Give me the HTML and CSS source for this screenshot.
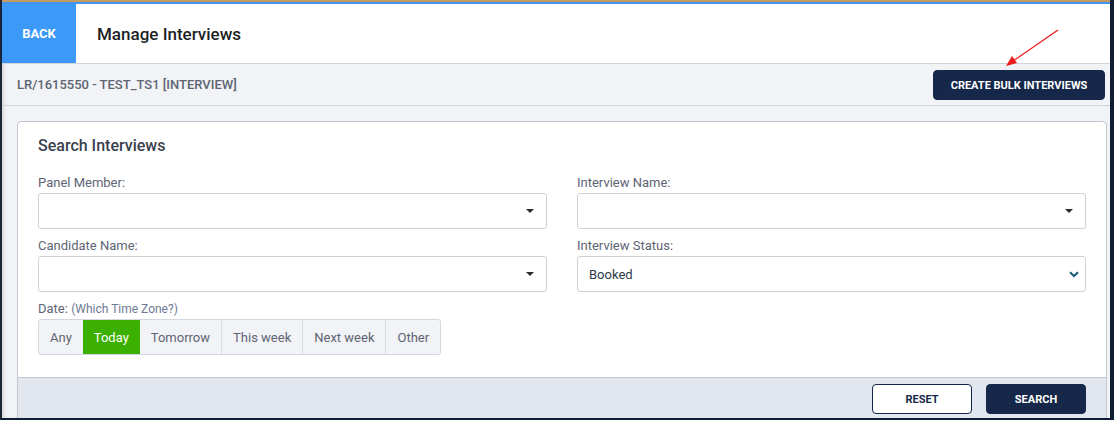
FILE: index.html
```html
<!DOCTYPE html>
<html lang="en">
<head>
    <meta charset="UTF-8">
    <title>Manage Interviews</title>
    <link rel="stylesheet" href="styles.css">
</head>
<body>
    <div class="frame">
        <div class="top-strip"></div>

        <div class="header">
            <a class="back-btn" href="#">BACK</a>
            <h1>Manage Interviews</h1>
        </div>

        <div class="subbar">
            <span class="job-ref">LR/1615550 - TEST_TS1 [INTERVIEW]</span>
            <button class="btn-dark bulk-btn">CREATE BULK INTERVIEWS</button>
            <svg class="arrow" width="60" height="40" viewBox="0 0 60 40">
                <line x1="55" y1="2" x2="10" y2="33" stroke="#ee1c1c" stroke-width="1.3"/>
                <polygon points="3,38 9,28 14,35" fill="#ee1c1c"/>
            </svg>
        </div>

        <div class="panel">
            <div class="panel-body">
                <h2>Search Interviews</h2>

                <div class="form-grid">
                    <div class="field">
                        <label>Panel Member:</label>
                        <div class="select"><span class="caret"></span></div>
                    </div>
                    <div class="field">
                        <label>Interview Name:</label>
                        <div class="select"><span class="caret"></span></div>
                    </div>
                    <div class="field">
                        <label>Candidate Name:</label>
                        <div class="select"><span class="caret"></span></div>
                    </div>
                    <div class="field">
                        <label>Interview Status:</label>
                        <div class="select">
                            <span class="value">Booked</span>
                            <svg class="chevron" width="10" height="7" viewBox="0 0 10 7">
                                <path d="M1 1.2 L5 5 L9 1.2" fill="none" stroke="#1d5878" stroke-width="2"/>
                            </svg>
                        </div>
                    </div>
                </div>

                <div class="date-row">
                    <label>Date: <span class="tz">(Which Time Zone?)</span></label>
                    <div class="btn-group">
                        <span>Any</span>
                        <span class="active">Today</span>
                        <span>Tomorrow</span>
                        <span>This week</span>
                        <span>Next week</span>
                        <span>Other</span>
                    </div>
                </div>
            </div>

            <div class="panel-footer">
                <button class="btn-light">RESET</button>
                <button class="btn-dark">SEARCH</button>
            </div>
        </div>
    </div>
</body>
</html>
```

FILE: styles.css
```css
html, body {
    margin: 0;
    padding: 0;
    background-color: white;
}

body {
    font-family: Roboto, 'Liberation Sans', Arial, sans-serif;
    color: #5b6272;
    width: 1114px;
    height: 422px;
    overflow: hidden;
}

.frame {
    width: 1108px;
    height: 418px;
    border-left: 2px solid #1a2638;
    border-right: 4px solid #0f1e33;
    border-bottom: 2px solid #0f1e33;
    box-shadow: inset 4px 0 4px -2px rgba(0,0,0,0.12);
    background-color: #f2f3f6;
    overflow: hidden;
}

.top-strip {
    height: 2px;
    background-color: #c39b62;
    border-bottom: 2px solid #3f95ef;
}

.header {
    display: flex;
    align-items: center;
    height: 59px;
    background-color: white;
    border-bottom: 1px solid #d0d4da;
}

.back-btn {
    display: flex;
    align-items: center;
    justify-content: center;
    width: 74px;
    height: 100%;
    background-color: #3d99f8;
    color: white;
    font-size: 13px;
    font-weight: bold;
    text-decoration: none;
}

.header h1 {
    margin: 0 0 0 21px;
    font-size: 17px;
    font-weight: 500;
    color: #1d1f24;
}

.subbar {
    position: relative;
    display: flex;
    align-items: center;
    justify-content: space-between;
    height: 41px;
    padding: 0 5px 0 15px;
    border-bottom: 1px solid #d0d4da;
}

.job-ref {
    font-size: 13px;
    font-weight: 500;
    color: #5d6473;
}

.arrow {
    position: absolute;
    top: -36px;
    right: 47px;
}

button {
    font-family: inherit;
    font-size: 11px;
    font-weight: bold;
    border-radius: 4px;
    cursor: pointer;
}

.btn-dark {
    background-color: #16284a;
    color: white;
    border: 1px solid #16284a;
}

.btn-light {
    background-color: white;
    color: #16284a;
    border: 1px solid #16284a;
}

.bulk-btn {
    width: 172px;
    height: 30px;
    margin: 1px 0 0 0;
}

.panel {
    margin: 15px 3px 0 15px;
    background-color: white;
    border: 1px solid #c2c7d0;
    border-radius: 4px;
}

.panel-body {
    padding: 14px 20px 22px 20px;
}

.panel-body h2 {
    margin: 0 0 20px 0;
    font-size: 16px;
    font-weight: 500;
    color: #3a404d;
}

.form-grid {
    display: grid;
    grid-template-columns: 1fr 1fr;
    column-gap: 30px;
    row-gap: 9px;
}

label {
    display: block;
    font-size: 13px;
    color: #5d6473;
    margin-bottom: 3px;
}

.select {
    position: relative;
    display: flex;
    align-items: center;
    height: 34px;
    padding: 0 11px;
    border: 1px solid #cdd1d8;
    border-radius: 3px;
    background-color: white;
}

.caret {
    position: absolute;
    right: 12px;
    top: 15px;
    border-left: 4px solid transparent;
    border-right: 4px solid transparent;
    border-top: 4px solid #2b2b2b;
}

.value {
    font-size: 13px;
    color: #2c3a4a;
}

.chevron {
    position: absolute;
    right: 6px;
    top: 14px;
}

.date-row {
    margin-top: 9px;
}

.tz {
    font-size: 12px;
    color: #6e7a94;
}

.btn-group {
    display: inline-flex;
    height: 34px;
    border: 1px solid #d4d7dd;
    border-radius: 3px;
    background-color: #f2f3f6;
    overflow: hidden;
}

.btn-group span {
    display: flex;
    align-items: center;
    padding: 0 11px;
    font-size: 13px;
    color: #5d6473;
    border-left: 1px solid #d9dce2;
}

.btn-group span:first-child {
    border-left: none;
}

.btn-group .active {
    background-color: #3bb000;
    color: white;
    border-left: none;
}

.btn-group .active + span {
    border-left: none;
}

.panel-footer {
    display: flex;
    justify-content: flex-end;
    gap: 14px;
    height: 42px;
    padding: 6px 20px 0 0;
    background-color: #e2e6ee;
    border-top: 1px solid #c2c7d0;
}

.panel-footer button {
    width: 100px;
    height: 30px;
}
```
